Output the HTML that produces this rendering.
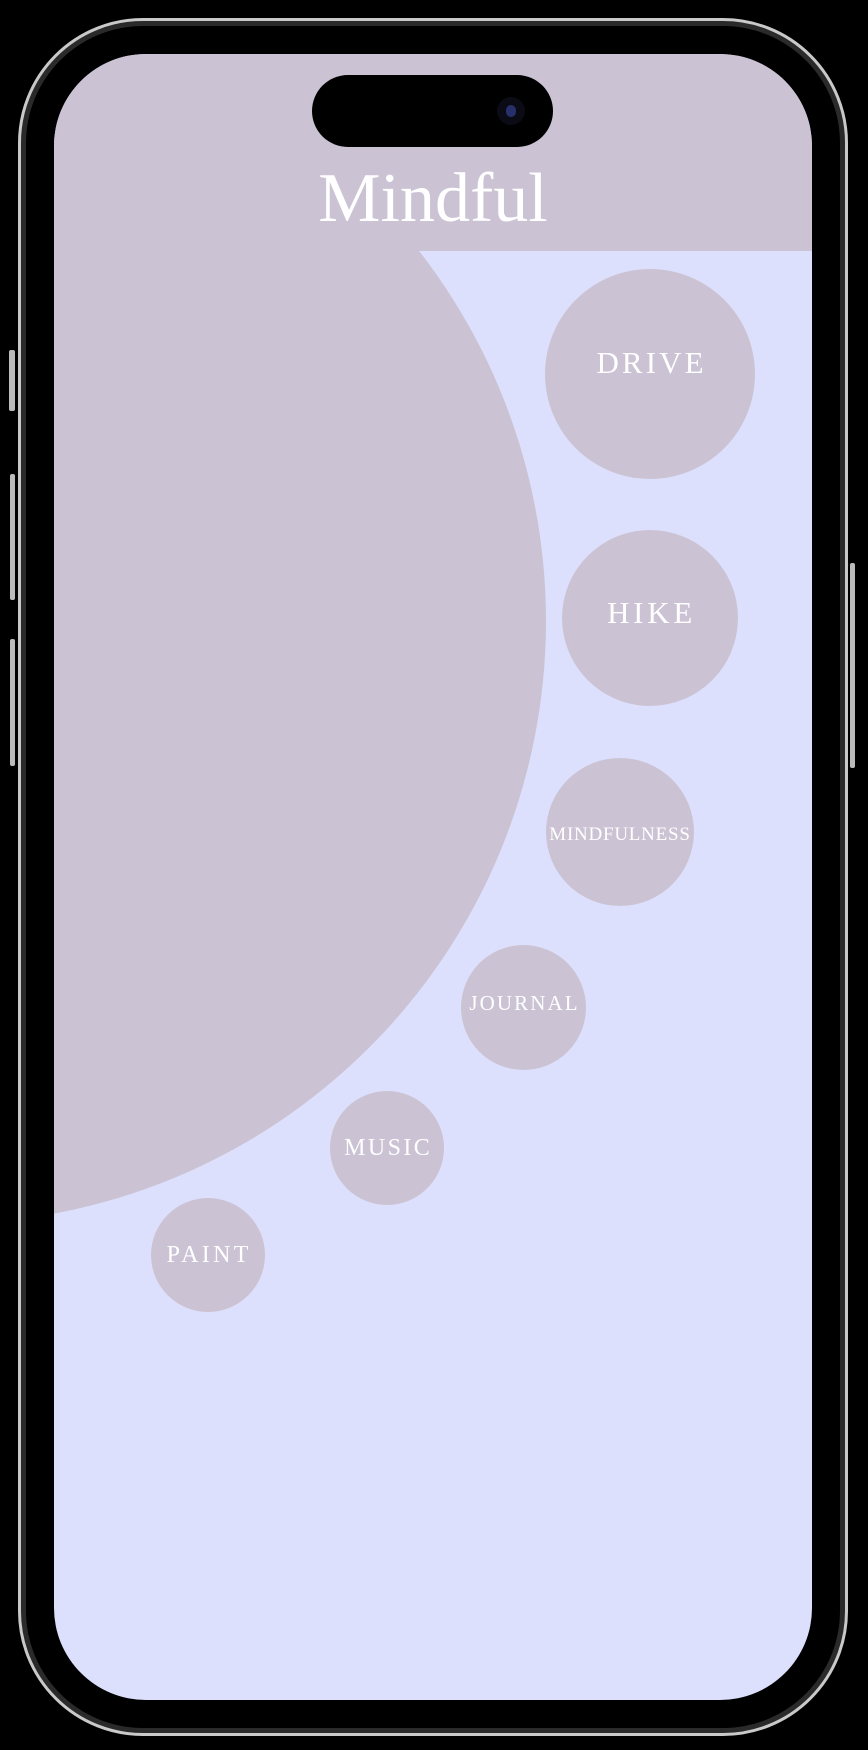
<!DOCTYPE html>
<html><head><meta charset="utf-8"><style>
html,body{margin:0;padding:0;background:#000;}
body{width:868px;height:1750px;position:relative;overflow:hidden;font-family:"Liberation Serif",serif;}
.frame{position:absolute;left:18px;top:18px;width:830px;height:1718px;border-radius:125px;border:3px solid #c9c9c9;box-sizing:border-box;box-shadow:inset 0 0 0 5px #2a2a2a;}
.btn{position:absolute;background:#bbb;border-radius:2px;}
.screen{position:absolute;left:54px;top:54px;width:758px;height:1646px;border-radius:92px;background:#dde0fc;overflow:hidden;}
.header{position:absolute;left:0;top:0;width:758px;height:197px;background:#cbc3d4;}
.big{position:absolute;border-radius:50%;background:#cbc3d4;}
.title{position:absolute;left:0;width:758px;top:110px;text-align:center;color:#fff;font-size:70px;line-height:1;}
.island{position:absolute;left:258px;top:21px;width:241px;height:72px;border-radius:36px;background:#000;}
.cam{position:absolute;left:185px;top:22px;width:28px;height:28px;border-radius:50%;background:#0b0b16;}
.cam:after{content:"";position:absolute;left:9px;top:8px;width:10px;height:12px;border-radius:5px;background:#27306a;}
.c{position:absolute;border-radius:50%;background:#cbc3d4;color:#fff;display:flex;align-items:center;justify-content:center;text-transform:uppercase;line-height:1;letter-spacing:0.1em;}
.c span{position:relative;top:-8px;margin-right:-0.1em;}
</style></head><body>
<div class="frame"></div>
<div class="btn" style="left:9px;top:350px;width:6px;height:61px"></div>
<div class="btn" style="left:10px;top:474px;width:5px;height:126px"></div>
<div class="btn" style="left:10px;top:639px;width:5px;height:127px"></div>
<div class="btn" style="left:850px;top:563px;width:5px;height:205px"></div>
<div class="screen">
  <div class="header"></div>
  <div class="big" style="left:-714px;top:-36px;width:1206px;height:1206px"></div>
  <div class="island"><div class="cam"></div></div>
  <div class="title">Mindful</div>
  <div class="c" style="left:491px;top:215px;width:210px;height:210px;font-size:31px"><span style="top:-12px">Drive</span></div>
  <div class="c" style="left:508px;top:476px;width:176px;height:176px;font-size:31px;letter-spacing:0.12em"><span style="top:-6px">Hike</span></div>
  <div class="c" style="left:492px;top:704px;width:148px;height:148px;font-size:19px;letter-spacing:0.04em"><span style="top:2px;margin-right:0">Mindfulness</span></div>
  <div class="c" style="left:407px;top:891px;width:125px;height:125px;font-size:21px"><span style="top:-4px">Journal</span></div>
  <div class="c" style="left:276px;top:1037px;width:114px;height:114px;font-size:24px"><span style="top:0">Music</span></div>
  <div class="c" style="left:97px;top:1144px;width:114px;height:114px;font-size:24px;letter-spacing:0.14em"><span style="top:0">Paint</span></div>
</div>
</body></html>
